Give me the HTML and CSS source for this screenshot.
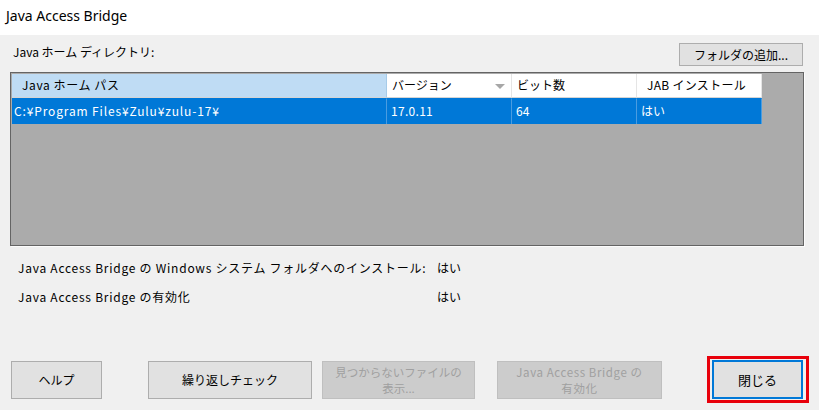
FILE: index.html
```html
<!DOCTYPE html>
<html lang="ja">
<head>
  <meta charset="UTF-8" />
  <title>Java Access Bridge</title>
  <link rel="stylesheet" href="styles.css">
</head>
<body>
<div class="window">

  <!-- タイトルバー -->
  <div class="titlebar">Java Access Bridge</div>

  <div class="content">

    <!-- ディレクトリ -->
    <div class="dir-row">
      <span class="label">Java ホーム ディレクトリ:</span>
      <button class="btn btn-add">フォルダの追加...</button>
    </div>

    <!-- リスト -->
    <div class="listview">
      <div class="lv-header">
        <div class="col col-path hot">Java ホーム パス</div>
        <div class="col col-ver">バージョン<span class="sort-arrow"></span></div>
        <div class="col col-bit">ビット数</div>
        <div class="col col-jab">JAB インストール</div>
      </div>
      <div class="lv-row selected">
        <div class="col col-path">C:¥Program Files¥Zulu¥zulu-17¥</div>
        <div class="col col-ver">17.0.11</div>
        <div class="col col-bit">64</div>
        <div class="col col-jab">はい</div>
      </div>
    </div>

    <!-- 状態 -->
    <div class="status">
      <div class="status-row">
        <span class="status-name">Java Access Bridge の Windows システム フォルダへのインストール:</span>
        <span class="status-value">はい</span>
      </div>
      <div class="status-row">
        <span class="status-name">Java Access Bridge の有効化</span>
        <span class="status-value">はい</span>
      </div>
    </div>

    <!-- ボタン -->
    <div class="buttons">
      <button class="btn btn-help">ヘルプ</button>
      <button class="btn btn-check">繰り返しチェック</button>
      <button class="btn btn-missing" disabled>見つからないファイルの<br>表示...</button>
      <button class="btn btn-enable" disabled>Java Access Bridge の<br>有効化</button>
      <div class="highlight">
        <button class="btn btn-close">閉じる</button>
      </div>
    </div>

  </div>
</div>
</body>
</html>
```

FILE: styles.css
```css
body {
  margin: 0;
  font-family: "Noto Sans CJK JP", "Noto Sans", sans-serif;
  font-size: 12px;
  color: #000;
}
.window {
  width: 819px;
  height: 410px;
  background: #f0f0f0;
  overflow: hidden;
}
.titlebar {
  height: 35px;
  background: #fff;
  font-family: "Noto Sans", "Noto Sans CJK JP", sans-serif;
  font-size: 14px;
  line-height: 32px;
  padding-left: 6px;
}
.content {
  padding: 0 15px 0 10px;
}
.dir-row {
  display: flex;
  justify-content: space-between;
  align-items: center;
  height: 37px;
}
.dir-row .label {
  padding-left: 3px;
  padding-bottom: 4px;
}
.btn {
  font-family: inherit;
  font-size: 12px;
  background: #e1e1e1;
  border: 1px solid #adadad;
  color: #000;
  padding: 0;
  margin: 0;
  line-height: 15px;
}
.btn-add {
  width: 124px;
  height: 23px;
  margin-right: 1px;
  margin-top: 1px;
}
.listview {
  height: 170px;
  border: 1px solid #646464;
  background: #ababab;
  padding: 1px;
  box-shadow: 1px 1px 0 #fcfcfc;
}
.lv-header, .lv-row {
  display: flex;
}
.col {
  box-sizing: border-box;
  white-space: nowrap;
  overflow: hidden;
}
.col-path { width: 375px; }
.col-ver { width: 125px; }
.col-bit { width: 125px; }
.col-jab { width: 125px; }
.lv-header .col {
  height: 24px;
  line-height: 22px;
  background: #fff;
  border-right: 1px solid #e5e5e5;
  border-bottom: 1px solid #d5d5d5;
  padding-left: 5px;
  position: relative;
}
.lv-header .col.hot {
  background: #bfdcf4;
  border-right-color: #a6cbe8;
  padding-left: 10px;
  letter-spacing: 0.6px;
}
.lv-header .col-jab {
  padding-left: 10px;
  letter-spacing: 0.3px;
}
.sort-arrow {
  position: absolute;
  right: 6px;
  top: 10px;
  border-left: 5px solid transparent;
  border-right: 5px solid transparent;
  border-top: 5px solid #a7a7a7;
}
.lv-row .col {
  height: 26px;
  line-height: 24px;
  background: #0078d7;
  color: #fff;
  border-right: 1px solid #4a9ce0;
  border-top: 1px solid #0078d7;
  padding-left: 4px;
}
.lv-row .col-path {
  padding-left: 2px;
  letter-spacing: 0.85px;
}
.lv-row .col-ver {
  letter-spacing: 0.3px;
}
.status {
  padding: 12px 0 0 8px;
}
.status-row {
  display: flex;
  height: 29px;
  line-height: 20px;
}
.status-name {
  width: 419px;
  letter-spacing: 0.75px;
}
.buttons {
  display: flex;
  align-items: center;
  margin-top: 40px;
  padding-left: 1px;
}
.buttons > * {
  flex-shrink: 0;
}
.btn-help { width: 91px; height: 38px; }
.btn-check { width: 164px; height: 38px; margin-left: 46px; }
.btn-missing { width: 153px; height: 38px; margin-left: 10px; }
.btn-enable { width: 165px; height: 38px; margin-left: 22px; letter-spacing: 0.6px; }
.btn:disabled {
  background: #cccccc;
  border-color: #bfbfbf;
  color: #a0a0a0;
  font-size: 11.5px;
  line-height: 16px;
}
.highlight {
  margin-left: 45px;
  border: 3px solid #e8000b;
  padding: 1px 3px 1px 2px;
}
.btn-close {
  width: 91px;
  height: 39px;
  border: 2px solid #0078d7;
  font-size: 13px;
}
```
